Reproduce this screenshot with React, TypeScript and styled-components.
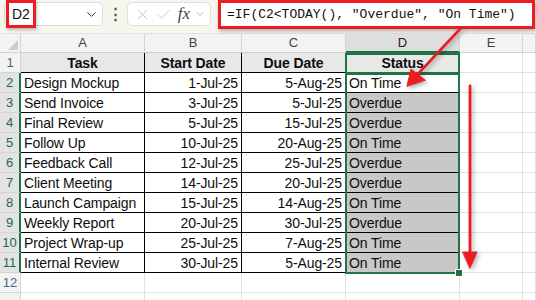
import React from 'react';
import styled, { createGlobalStyle } from 'styled-components';
import { ChevronDown, X, Check } from 'lucide-react';

const GlobalStyle = createGlobalStyle`
  html, body {
    margin: 0;
    padding: 0;
    background: #ffffff;
    overflow: hidden;
  }
  body {
    font-family: "Liberation Sans", Arial, sans-serif;
    color: #111;
  }
`

const Page = styled.div`
  position: relative;
  width: 536px;
  height: 300px;
  overflow: hidden;
`

const FormulaBar = styled.div`
  height: 34px;
  box-sizing: border-box;
  background: #f6f6ef;
  border-bottom: 1px solid #e2e2dc;
  display: flex;
  align-items: flex-start;
  padding: 2px 1px 0 4px;
`

const NameBox = styled.div`
  width: 99px;
  height: 24px;
  box-sizing: border-box;
  background: #fff;
  border: 1px solid #dcdcd6;
  border-radius: 5px;
  display: flex;
  align-items: center;
  padding-right: 3px;
  color: #333;
`

const NameLabel = styled.div`
  width: 30px;
  height: 28px;
  box-sizing: border-box;
  margin: -1px 0 0 1px;
  border: 3px solid #ec1c24;
  padding-left: 3px;
  font-size: 14px;
  line-height: 22px;
  color: #111;
  box-shadow: 1px 2px 3px rgba(0, 0, 0, 0.25);
`

const Spacer = styled.div`
  flex: 1;
`

const Dots = styled.div`
  width: 24px;
  text-align: center;
  font-size: 15px;
  line-height: 24px;
  color: #555;
  font-weight: bold;
`

const FxBox = styled.div`
  width: 84px;
  height: 24px;
  box-sizing: border-box;
  background: #fff;
  border: 1px solid #e0e0da;
  border-radius: 5px;
  display: flex;
  align-items: center;
  justify-content: space-around;
  padding: 0 2px 0 4px;
`

const Fx = styled.span`
  font-family: "Liberation Serif", serif;
  font-style: italic;
  font-size: 17px;
  color: #444;
  margin-left: 2px;
`

const FormulaInput = styled.div`
  flex: 1;
  height: 29px;
  margin: -2px 0 0 7px;
  box-sizing: border-box;
  background: #fff;
  border: 3px solid #ec1c24;
  padding-left: 6px;
  font-family: "Liberation Mono", "DejaVu Sans Mono", monospace;
  font-size: 13px;
  line-height: 23px;
  color: #111;
  white-space: nowrap;
  box-shadow: 1px 2px 4px rgba(0, 0, 0, 0.3);
`

const Sheet = styled.div`
  position: relative;
  display: grid;
  grid-template-columns: 21px 124px 97px 104px 114px 63px 1fr;
  grid-template-rows: 19px repeat(13, 20px);
`

const Corner = styled.div`
  position: relative;
  box-sizing: border-box;
  background: #f3f3f3;
  border-right: 1px solid #d4d4d4;
  border-bottom: 1px solid #cfcfcf;
  &::after {
    content: '';
    position: absolute;
    right: 2px;
    bottom: 2px;
    border-style: solid;
    border-width: 0 0 10px 10px;
    border-color: transparent transparent #cdcdcd transparent;
  }
`

const ColHead = styled.div<{ $active?: boolean }>`
  box-sizing: border-box;
  background: ${p => (p.$active ? '#dedede' : '#f3f3f3')};
  border-right: 1px solid #d4d4d4;
  border-bottom: ${p => (p.$active ? '2px solid #217346' : '1px solid #cfcfcf')};
  text-align: center;
  font-size: 13px;
  line-height: 18px;
  color: ${p => (p.$active ? '#222' : '#444')};
`

const RowHead = styled.div<{ $active?: boolean }>`
  box-sizing: border-box;
  background: ${p => (p.$active ? '#e3e3e3' : '#f3f3f3')};
  border-right: ${p => (p.$active ? '2px solid #217346' : '1px solid #d4d4d4')};
  border-bottom: 1px solid #d4d4d4;
  text-align: center;
  font-size: 13px;
  line-height: 20px;
  color: ${p => (p.$active ? '#1e6b48' : '#4b6786')};
`

type Tone = 'grid' | 'table' | 'head' | 'picked' | 'status'

const fills: Record<Tone, string> = {
  grid: '#ffffff',
  table: '#ffffff',
  head: '#e8e8e8',
  picked: '#c8c8c8',
  status: '#ffffff',
}

const Cell = styled.div<{ $tone?: Tone; $align?: 'left' | 'right' | 'center' }>`
  box-sizing: border-box;
  background: ${p => fills[p.$tone ?? 'grid']};
  border-right: 1px solid ${p => ((p.$tone ?? 'grid') === 'grid' ? '#e1e1e1' : '#000')};
  border-bottom: 1px solid ${p => ((p.$tone ?? 'grid') === 'grid' ? '#e1e1e1' : '#000')};
  padding: 0 3px;
  font-size: 14px;
  line-height: 20px;
  letter-spacing: -0.1px;
  font-weight: ${p => (p.$tone === 'head' ? 'bold' : 'normal')};
  text-align: ${p => p.$align ?? 'left'};
  white-space: nowrap;
  overflow: hidden;
  color: #0d0d0d;
`

/* absolutely positioned grid child: sits over column D without taking cells */
const Selection = styled.div<{ $from: number; $to: number }>`
  position: absolute;
  grid-column: 5 / 6;
  grid-row: ${p => p.$from} / ${p => p.$to};
  top: 0;
  left: -1px;
  right: 0;
  bottom: -1px;
  border: 2px solid #217346;
  pointer-events: none;
  z-index: 2;
`

const FillHandle = styled.div`
  position: absolute;
  right: -5px;
  bottom: -5px;
  width: 6px;
  height: 6px;
  background: #217346;
  border: 1px solid #fff;
`

const Arrows = styled.svg`
  position: absolute;
  left: 0;
  top: 0;
  pointer-events: none;
  z-index: 5;
  filter: drop-shadow(2px 2px 2px rgba(0, 0, 0, 0.3));
`

const rows = [
  ['Design Mockup', '1-Jul-25', '5-Aug-25', 'On Time'],
  ['Send Invoice', '3-Jul-25', '5-Jul-25', 'Overdue'],
  ['Final Review', '5-Jul-25', '15-Jul-25', 'Overdue'],
  ['Follow Up', '10-Jul-25', '20-Aug-25', 'On Time'],
  ['Feedback Call', '12-Jul-25', '25-Jul-25', 'Overdue'],
  ['Client Meeting', '14-Jul-25', '20-Jul-25', 'Overdue'],
  ['Launch Campaign', '15-Jul-25', '14-Aug-25', 'On Time'],
  ['Weekly Report', '20-Jul-25', '30-Jul-25', 'Overdue'],
  ['Project Wrap-up', '25-Jul-25', '7-Aug-25', 'On Time'],
  ['Internal Review', '30-Jul-25', '5-Aug-25', 'On Time'],
]

const letters = ['A', 'B', 'C', 'D', 'E', '']

const App: React.FC = () => {
  return (
    <Page>
      <GlobalStyle />
      <FormulaBar>
        <NameBox>
          <NameLabel>D2</NameLabel>
          <Spacer />
          <ChevronDown size={15} strokeWidth={1.6} />
        </NameBox>
        <Dots>⋮</Dots>
        <FxBox>
          <X size={17} strokeWidth={1.1} color="#b8b8b8" />
          <Check size={17} strokeWidth={1.1} color="#b8b8b8" />
          <Fx>fx</Fx>
          <ChevronDown size={12} strokeWidth={1.4} color="#9a9a9a" />
        </FxBox>
        <FormulaInput>=IF(C2&lt;TODAY(), "Overdue", "On Time")</FormulaInput>
      </FormulaBar>

      <Sheet>
        <Corner />
        {letters.map((l, i) => (
          <ColHead key={i} $active={l === 'D'}>{l}</ColHead>
        ))}

        <RowHead>1</RowHead>
        <Cell $tone="head" $align="center">Task</Cell>
        <Cell $tone="head" $align="center">Start Date</Cell>
        <Cell $tone="head" $align="center">Due Date</Cell>
        <Cell $tone="head" $align="center">Status</Cell>
        <Cell />
        <Cell />

        {rows.map((r, i) => (
          <React.Fragment key={r[0]}>
            <RowHead $active>{i + 2}</RowHead>
            <Cell $tone="table">{r[0]}</Cell>
            <Cell $tone="table" $align="right">{r[1]}</Cell>
            <Cell $tone="table" $align="right">{r[2]}</Cell>
            <Cell $tone={i === 0 ? 'status' : 'picked'}>{r[3]}</Cell>
            <Cell />
            <Cell />
          </React.Fragment>
        ))}

        {['12', ''].map((n, k) => (
          <React.Fragment key={k}>
            <RowHead>{n}</RowHead>
            {letters.map((_, i) => (
              <Cell key={i} />
            ))}
          </React.Fragment>
        ))}

        <Selection $from={2} $to={3} />
        <Selection $from={3} $to={13}>
          <FillHandle />
        </Selection>
      </Sheet>

      <Arrows width="536" height="300" viewBox="0 0 536 300">
        <g fill="#ec1c24" stroke="#ec1c24" strokeLinecap="round">
          <line x1="460" y1="29" x2="417" y2="75" strokeWidth="2.6" />
          <polygon points="407,86 411,69 425,80" strokeWidth="1" strokeLinejoin="round" />
          <line x1="470" y1="86" x2="470" y2="254" strokeWidth="2.8" />
          <polygon points="463,252 477,252 470,268" strokeWidth="1" strokeLinejoin="round" />
        </g>
      </Arrows>
    </Page>
  );
}

export default App;
